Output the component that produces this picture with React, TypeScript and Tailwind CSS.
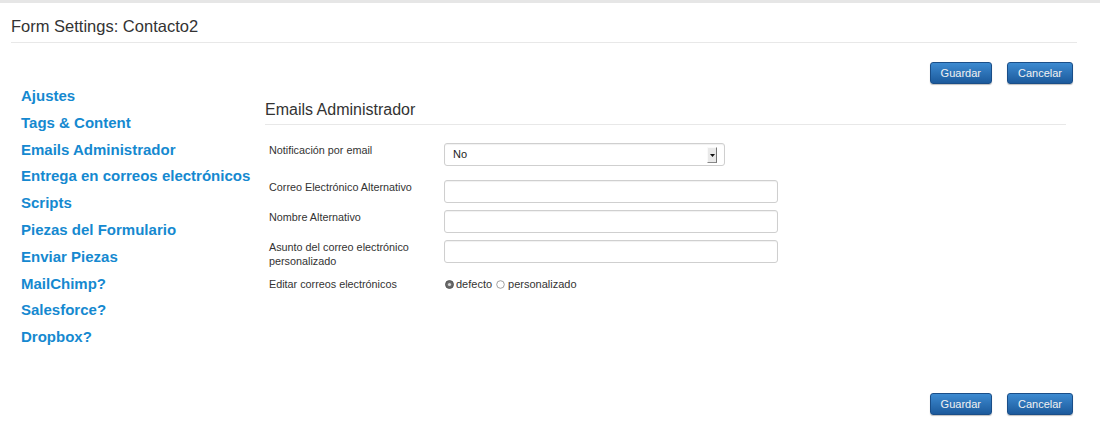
import React from "react";

const navItems = [
  "Ajustes",
  "Tags & Content",
  "Emails Administrador",
  "Entrega en correos electrónicos",
  "Scripts",
  "Piezas del Formulario",
  "Enviar Piezas",
  "MailChimp?",
  "Salesforce?",
  "Dropbox?",
];

function Btn({ children }: { children: React.ReactNode }) {
  return (
    <button className="h-[22px] px-[10px] rounded-[3px] border border-[#1a4e88] bg-linear-to-b from-[#3d8bd1] to-[#1c5a9c] text-[11px] leading-[14px] text-[#f2f2f2] shadow-[0_1px_1px_rgba(0,0,0,0.25)]">
      {children}
    </button>
  );
}

function Buttons() {
  return (
    <div className="flex justify-end gap-[15px] pr-[27px]">
      <Btn>Guardar</Btn>
      <Btn>Cancelar</Btn>
    </div>
  );
}

function Input() {
  return (
    <div className="w-[334px] h-[23px] rounded-[3px] border border-[#cfcfcf] bg-white shadow-[inset_0_1px_1px_rgba(0,0,0,0.06)]" />
  );
}

function Label({ children }: { children: React.ReactNode }) {
  return (
    <div className="w-[175px] shrink-0 text-[10.8px] leading-[14px] text-[#333]">
      {children}
    </div>
  );
}

function Radio({ checked }: { checked?: boolean }) {
  return (
    <svg width="9" height="9" viewBox="0 0 9 9" className="shrink-0">
      {checked ? (
        <>
          <circle cx="4.5" cy="4.5" r="4" fill="#6a6a6a" stroke="#4a4a4a" strokeWidth="0.8" />
          <circle cx="4.5" cy="4.5" r="1.6" fill="#d8d8d8" />
        </>
      ) : (
        <circle cx="4.5" cy="4.5" r="3.8" fill="#fff" stroke="#8a8a8a" strokeWidth="0.8" />
      )}
    </svg>
  );
}

export default function App() {
  return (
    <div className="w-[1100px] h-[436px] overflow-hidden bg-white border-t-[3px] border-[#e6e6e6] font-['Liberation_Sans',Arial,sans-serif] text-[#333]">
      <div className="ml-[11px] mr-[23px] pt-[13px] pb-[6px] border-b border-[#e8e8e8]">
        <div className="text-[16.5px] leading-[20px] text-[#333]">Form Settings: Contacto2</div>
      </div>

      <div className="mt-[19px]">
        <Buttons />
      </div>

      <div className="flex pl-[21px]">
        <nav className="w-[244px] shrink-0 -mt-[1px] flex flex-col">
          {navItems.map((item) => (
            <a
              key={item}
              className="whitespace-nowrap text-[15px] leading-[26.8px] font-bold text-[#1589d0]"
            >
              {item}
            </a>
          ))}
        </nav>

        <div className="w-[801px] pt-[16px]">
          <div className="pb-[4px] border-b border-[#e8e8e8] text-[16px] leading-[20px] text-[#333]">
            Emails Administrador
          </div>

          <div className="pl-[4px] mt-[18px] flex flex-col">
            <div className="flex">
              <Label>Notificación por email</Label>
              <div className="relative w-[281px] h-[23px] rounded-[3px] border border-[#cfcfcf] bg-white flex items-center pl-[8px] text-[11px] text-[#222] shadow-[inset_0_1px_1px_rgba(0,0,0,0.06)]">
                No
                <div className="absolute right-[7px] top-[3px] w-[10px] h-[16px] bg-[#e9e9e9] border-t border-l border-t-[#fafafa] border-l-[#fafafa] border-r border-b border-r-[#777] border-b-[#888] flex items-center justify-center">
                  <svg width="5" height="3" viewBox="0 0 5 3">
                    <path d="M0 0 H5 L2.5 3 Z" fill="#111" />
                  </svg>
                </div>
              </div>
            </div>

            <div className="flex mt-[14px]">
              <Label>Correo Electrónico Alternativo</Label>
              <Input />
            </div>

            <div className="flex mt-[7px]">
              <Label>Nombre Alternativo</Label>
              <Input />
            </div>

            <div className="flex mt-[7px]">
              <Label>
                Asunto del correo electrónico
                <br />
                personalizado
              </Label>
              <Input />
            </div>

            <div className="flex mt-[9px]">
              <Label>Editar correos electrónicos</Label>
              <div className="flex items-center text-[11px] leading-[14px] text-[#333]">
                <span className="ml-[1px]">
                  <Radio checked />
                </span>
                <span className="ml-[2px]">defecto</span>
                <span className="ml-[4px]">
                  <Radio />
                </span>
                <span className="ml-[3px]">personalizado</span>
              </div>
            </div>
          </div>
        </div>
      </div>

      <div className="mt-[42px]">
        <Buttons />
      </div>
    </div>
  );
}
